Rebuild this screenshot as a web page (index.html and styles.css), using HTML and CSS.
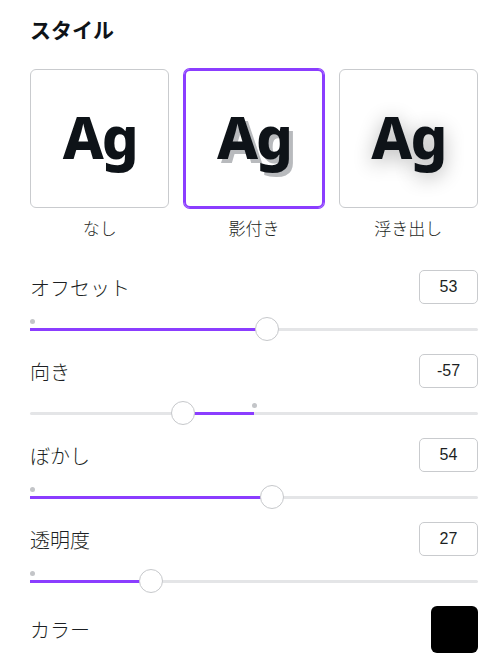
FILE: index.html
```html
<!DOCTYPE html>
<html>
<head>
    <title>スタイル</title>
    <link rel="stylesheet" href="styles.css">
</head>
<body>
    <div class="panel">
        <h2 class="title">スタイル</h2>

        <div class="style-grid">
            <div class="style-item">
                <div class="style-card"><span class="ag">Ag</span></div>
                <div class="style-name">なし</div>
            </div>
            <div class="style-item">
                <div class="style-card selected"><span class="ag ag-shadow">Ag</span></div>
                <div class="style-name">影付き</div>
            </div>
            <div class="style-item">
                <div class="style-card"><span class="ag ag-lift">Ag</span></div>
                <div class="style-name">浮き出し</div>
            </div>
        </div>

        <div class="controls">
            <div class="control">
                <div class="control-head">
                    <span class="control-label">オフセット</span>
                    <div class="value-box">53</div>
                </div>
                <div class="slider">
                    <div class="track"></div>
                    <span class="origin" style="left: 0%;"></span>
                    <div class="fill" style="left: 0%; width: 53%;"></div>
                    <span class="thumb" style="left: 53%;"></span>
                </div>
            </div>

            <div class="control">
                <div class="control-head">
                    <span class="control-label">向き</span>
                    <div class="value-box">-57</div>
                </div>
                <div class="slider">
                    <div class="track"></div>
                    <span class="origin" style="left: calc(50% - 2px);"></span>
                    <div class="fill" style="left: 34.17%; width: 15.83%;"></div>
                    <span class="thumb" style="left: 34.17%;"></span>
                </div>
            </div>

            <div class="control">
                <div class="control-head">
                    <span class="control-label">ぼかし</span>
                    <div class="value-box">54</div>
                </div>
                <div class="slider">
                    <div class="track"></div>
                    <span class="origin" style="left: 0%;"></span>
                    <div class="fill" style="left: 0%; width: 54%;"></div>
                    <span class="thumb" style="left: 54%;"></span>
                </div>
            </div>

            <div class="control">
                <div class="control-head">
                    <span class="control-label">透明度</span>
                    <div class="value-box">27</div>
                </div>
                <div class="slider">
                    <div class="track"></div>
                    <span class="origin" style="left: 0%;"></span>
                    <div class="fill" style="left: 0%; width: 27%;"></div>
                    <span class="thumb" style="left: 27%;"></span>
                </div>
            </div>

            <div class="color-row">
                <span class="control-label">カラー</span>
                <div class="swatch"></div>
            </div>
        </div>
    </div>
</body>
</html>
```

FILE: styles.css
```css
body {
    margin: 0;
    background: #ffffff;
    color: #0e1318;
    font-family: "Noto Sans CJK JP", "Noto Sans", sans-serif;
}
.panel {
    padding: 15px 22px 0 30px;
}
.title {
    margin: 0;
    font-size: 21px;
    line-height: 28px;
    font-weight: bold;
}
.style-grid {
    display: grid;
    grid-template-columns: repeat(3, 1fr);
    gap: 15px;
    margin-top: 26px;
}
.style-card {
    aspect-ratio: 1;
    box-sizing: border-box;
    border: 1px solid #c9cbce;
    border-radius: 6px;
    display: flex;
    justify-content: center;
    align-items: center;
}
.style-card.selected {
    border: 2px solid #8b3dff;
    box-shadow: 0 0 0 1px #8b3dff;
}
.ag {
    font-family: "Noto Sans", sans-serif;
    font-weight: 800;
    font-size: 58px;
    letter-spacing: -2px;
    line-height: 1;
    color: #0e1318;
    padding-bottom: 4px;
}
.ag-shadow {
    text-shadow: 4px 4px 0 #b8babd;
}
.ag-lift {
    text-shadow: 0 4px 20px rgba(0, 0, 0, 0.3);
}
.style-name {
    text-align: center;
    font-size: 17px;
    font-weight: 300;
    line-height: 20px;
    margin-top: 10px;
    color: #1c1f23;
}
.controls {
    display: flex;
    flex-direction: column;
    gap: 13px;
    margin-top: 32px;
}
.control-head {
    display: flex;
    justify-content: space-between;
    align-items: center;
    height: 34px;
}
.control-label {
    font-size: 20px;
    font-weight: 300;
    color: #1c1f23;
}
.value-box {
    width: 59px;
    height: 34px;
    box-sizing: border-box;
    border: 1px solid #c9cbce;
    border-radius: 5px;
    display: flex;
    justify-content: center;
    align-items: center;
    font-family: "Liberation Sans", Arial, sans-serif;
    font-size: 16px;
    color: #1c1f23;
}
.slider {
    position: relative;
    height: 24px;
    margin-top: 13px;
}
.track {
    position: absolute;
    left: 0;
    right: 0;
    top: 11px;
    height: 3px;
    border-radius: 2px;
    background: #e4e5e7;
}
.fill {
    position: absolute;
    top: 11px;
    height: 3px;
    background: #8b3dff;
}
.origin {
    position: absolute;
    top: 2px;
    width: 5px;
    height: 5px;
    border-radius: 50%;
    background: #c3c5c8;
}
.thumb {
    position: absolute;
    top: 0;
    width: 24px;
    height: 24px;
    margin-left: -12px;
    box-sizing: border-box;
    border-radius: 50%;
    background: #ffffff;
    border: 1px solid #c6c8cb;
}
.color-row {
    display: flex;
    justify-content: space-between;
    align-items: center;
    height: 47px;
}
.swatch {
    width: 47px;
    height: 47px;
    border-radius: 6px;
    background: #000000;
}
```
